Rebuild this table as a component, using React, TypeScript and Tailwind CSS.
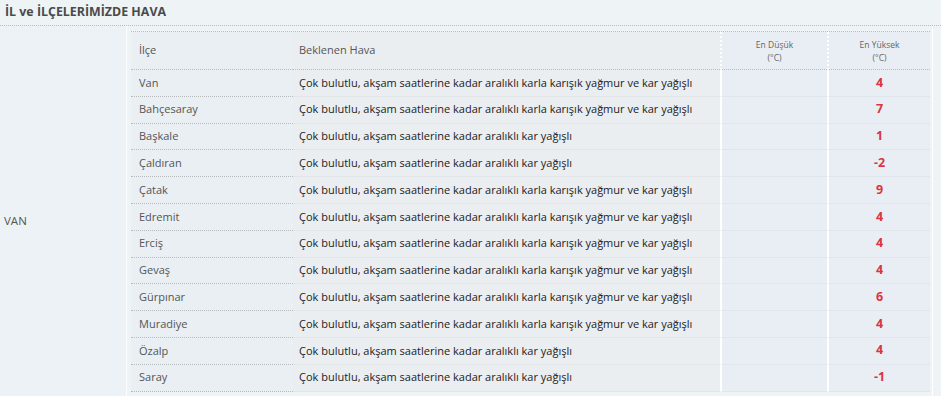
import React from 'react';

interface Row {
    ilce: string;
    hava: string;
    min: string;
    max: string;
}

const A = 'Çok bulutlu, akşam saatlerine kadar aralıklı karla karışık yağmur ve kar yağışlı';
const B = 'Çok bulutlu, akşam saatlerine kadar aralıklı kar yağışlı';

const rows: Row[] = [
    { ilce: 'Van', hava: A, min: '', max: '4' },
    { ilce: 'Bahçesaray', hava: A, min: '', max: '7' },
    { ilce: 'Başkale', hava: B, min: '', max: '1' },
    { ilce: 'Çaldıran', hava: B, min: '', max: '-2' },
    { ilce: 'Çatak', hava: A, min: '', max: '9' },
    { ilce: 'Edremit', hava: A, min: '', max: '4' },
    { ilce: 'Erciş', hava: A, min: '', max: '4' },
    { ilce: 'Gevaş', hava: A, min: '', max: '4' },
    { ilce: 'Gürpınar', hava: A, min: '', max: '6' },
    { ilce: 'Muradiye', hava: A, min: '', max: '4' },
    { ilce: 'Özalp', hava: B, min: '', max: '4' },
    { ilce: 'Saray', hava: B, min: '', max: '-1' },
];

const cols = 'grid grid-cols-[162px_429px_105px_103px]';

export default function App() {
    return (
        <div className="w-[941px] h-[396px] overflow-hidden bg-[#eef3f6] text-[#555] font-['Open_Sans',sans-serif]">
            <div className="h-[26px] px-[5px] flex items-center border-b border-dotted border-[#b9bcbf] text-[12.4px] font-bold text-[#4a4a4a]">
                İL ve İLÇELERİMİZDE HAVA
            </div>
            <div className="flex h-[370px]">
                <div className="w-[127px] border-r border-white bg-[#edf2f6] flex items-center pl-[4px] pt-[19px] text-[11.5px]">
                    VAN
                </div>
                <div className="pl-[4px] pt-[5px]">
                    <div className={`${cols} h-[39px] border-t border-dotted border-[#b9bcbf]`}>
                        <div className="bg-[#e9eff3] flex items-center pl-[8px] text-[11px] border-b border-dotted border-[#b9bcbf]">İlçe</div>
                        <div className="bg-[#ebeef1] flex items-center pl-[6px] text-[11px] border-b border-dotted border-[#b9bcbf] border-r-2 border-r-white border-r-solid">Beklenen Hava</div>
                        <div className="bg-[#e8eef3] flex flex-col items-center justify-center text-[8.5px] leading-[13px] text-[#666] border-b border-dotted border-[#b9bcbf]">
                            <span>En Düşük</span>
                            <span>(°C)</span>
                        </div>
                        <div className="bg-[#e8eef3] flex flex-col items-center justify-center text-[8.5px] leading-[13px] text-[#666] border-l-2 border-white border-b border-b-[#b9bcbf] border-dotted">
                            <span>En Yüksek</span>
                            <span>(°C)</span>
                        </div>
                    </div>
                    {rows.map((r) => (
                        <div key={r.ilce} className={`${cols} h-[26.8px]`}>
                            <div className="bg-[#e9eff3] flex items-center pl-[8px] text-[11px] border-b border-dotted border-[#b9bcbf]">{r.ilce}</div>
                            <div className="bg-[#ebeef1] flex items-center pl-[6px] text-[11px] text-[#222] border-b border-[#e2e6e9] border-r-2 border-r-white">{r.hava}</div>
                            <div className="bg-[#e8eef3] flex items-center justify-center text-[12px] border-b border-[#e0e6eb]">{r.min}</div>
                            <div className="bg-[#e8eef3] flex items-center justify-center text-[12.5px] font-bold text-[#d9363e] border-l-2 border-white border-b border-b-[#e0e6eb]">{r.max}</div>
                        </div>
                    ))}
                </div>
                <div className="w-px ml-[2px] bg-white" />
            </div>
        </div>
    );
}
